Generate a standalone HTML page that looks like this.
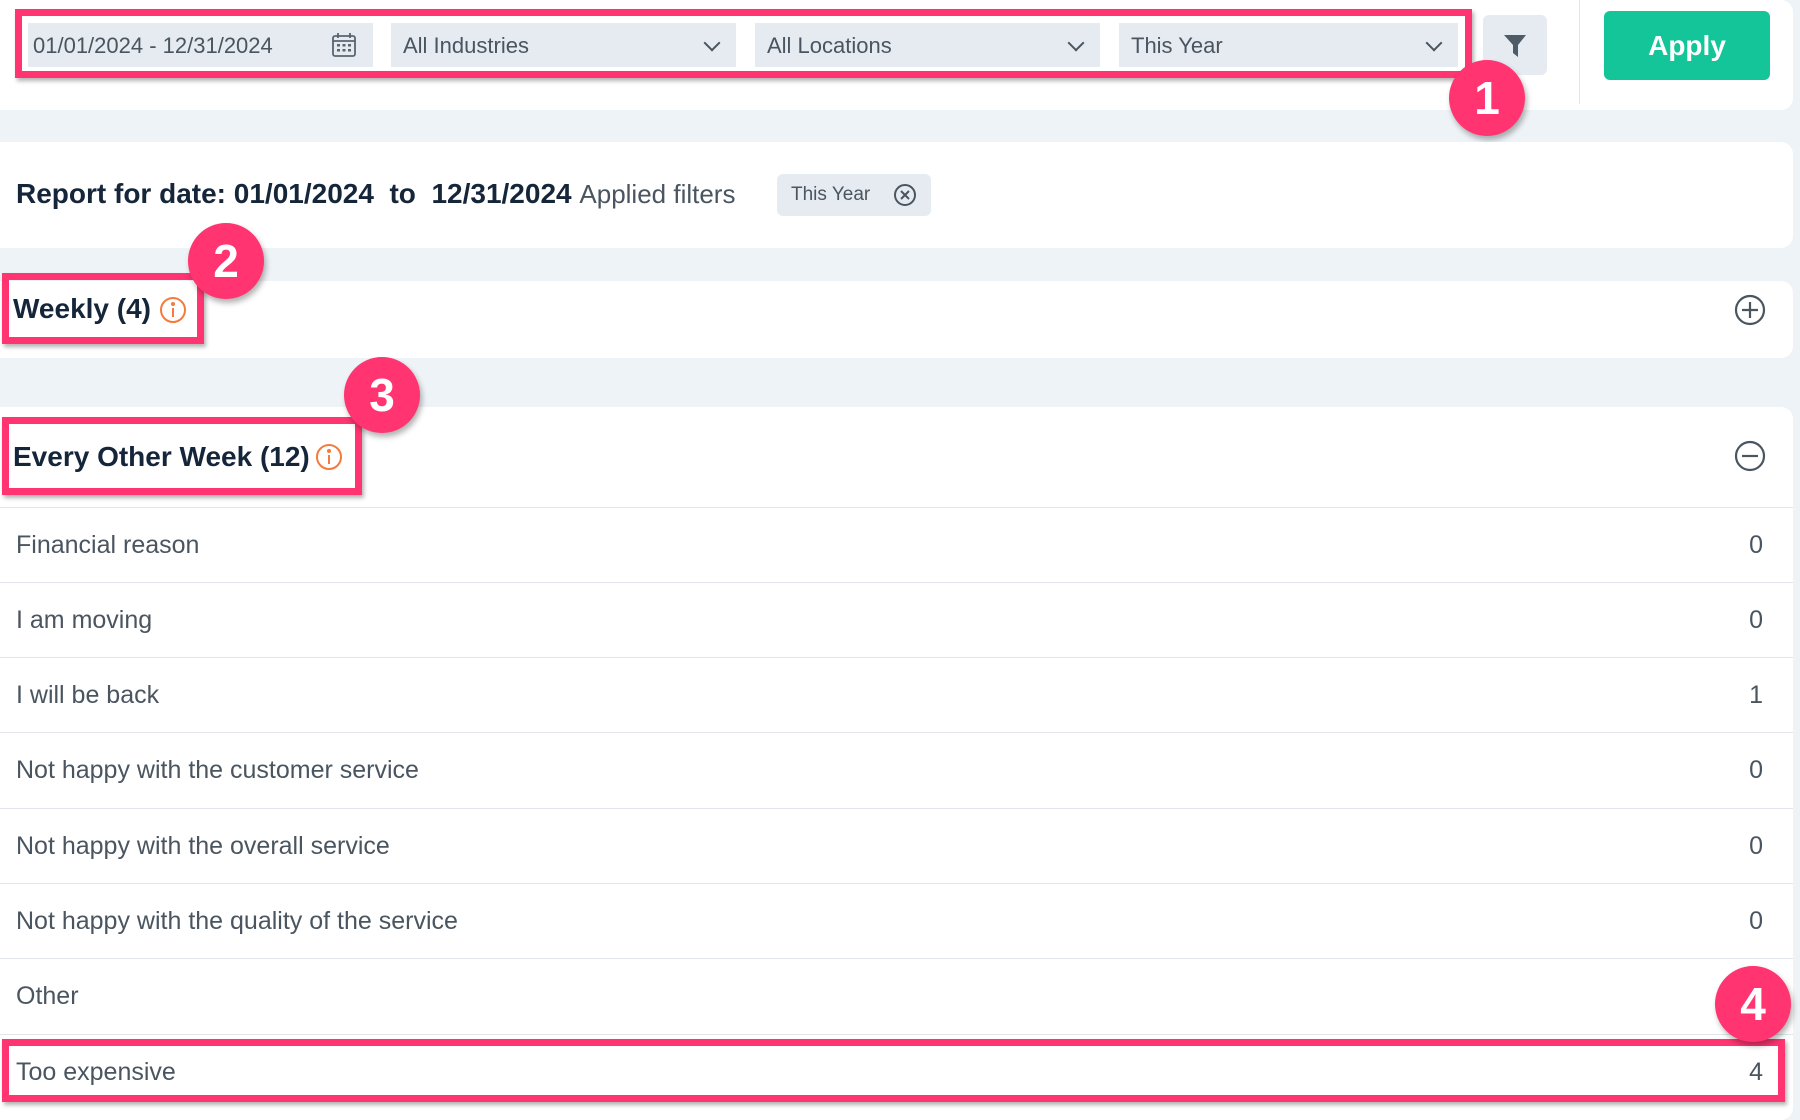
<!DOCTYPE html>
<html><head><meta charset="utf-8"><style>
*{box-sizing:border-box;margin:0;padding:0}
body{width:1800px;height:1120px;background:#eef3f7;font-family:"Liberation Sans",sans-serif;position:relative;overflow:hidden;color:#1b2a3a}
.abs{position:absolute}
.card{position:absolute;left:0;width:1793px;background:#fff;border-radius:0 12px 12px 0}
.inp{position:absolute;top:23px;height:44px;background:#e5ebf1;font-size:22px;color:#4a5560;padding:11px 12px;line-height:24px}
.chev{position:absolute;right:18px;top:14px;width:12px;height:12px;border-right:2px solid #4a5560;border-bottom:2px solid #4a5560;transform:rotate(45deg)}
.pink{position:absolute;border:7px solid #ff3470;box-shadow:2px 3px 4px rgba(0,0,0,.3)}
.badge{position:absolute;width:76px;height:76px;border-radius:50%;background:#ff3470;color:#fff;font-weight:bold;font-size:46px;text-align:center;line-height:76px;box-shadow:2px 4px 6px rgba(0,0,0,.3)}
.row{position:absolute;left:0;width:1793px;height:75px;border-top:1px solid #e2e6ea;font-size:25px;color:#4a5560;padding-left:16px;line-height:75px}
.row span{position:absolute;right:30px}
.h{font-size:28px;font-weight:bold;color:#15263a}
</style></head><body>
<div class="card" style="top:0;height:110px"></div>
<div class="inp" style="left:28px;width:345px;padding-left:5px">01/01/2024 - 12/31/2024
<svg class="abs" style="right:16px;top:9px" width="26" height="26" viewBox="0 0 26 26" fill="none" stroke="#5a6570" stroke-width="1.8"><rect x="2" y="4" width="22" height="20" rx="2"/><line x1="2" y1="9" x2="24" y2="9"/><line x1="7" y1="1" x2="7" y2="6"/><line x1="19" y1="1" x2="19" y2="6"/><g fill="#5a6570" stroke="none"><rect x="6" y="12" width="3" height="2.5"/><rect x="11.5" y="12" width="3" height="2.5"/><rect x="17" y="12" width="3" height="2.5"/><rect x="6" y="17" width="3" height="2.5"/><rect x="11.5" y="17" width="3" height="2.5"/><rect x="17" y="17" width="3" height="2.5"/></g></svg></div>
<div class="inp" style="left:391px;width:345px">All Industries<div class="chev"></div></div>
<div class="inp" style="left:755px;width:345px">All Locations<div class="chev"></div></div>
<div class="inp" style="left:1119px;width:339px">This Year<div class="chev"></div></div>
<div class="pink" style="left:15px;top:9px;width:1457px;height:69px"></div>
<div class="abs" style="left:1483px;top:15px;width:64px;height:60px;background:#e5ebf1;border-radius:6px">
<svg class="abs" style="left:19px;top:18px" width="26" height="26" viewBox="0 0 26 26"><path d="M2 2H24L16 12V24L11 20V12Z" fill="#4f5c68"/></svg></div>
<div class="abs" style="left:1579px;top:0;width:1px;height:104px;background:#e2e6ea"></div>
<div class="abs" style="left:1604px;top:11px;width:166px;height:69px;background:#13c598;border-radius:6px;color:#fff;font-weight:bold;font-size:28px;text-align:center;line-height:69px">Apply</div>
<div class="badge" style="left:1449px;top:60px">1</div>

<div class="card" style="top:142px;height:106px"></div>
<div class="abs" style="left:16px;top:178px;font-size:28px;font-weight:bold;color:#15263a;white-space:nowrap">Report for date: 01/01/2024&nbsp; to &nbsp;12/31/2024 <span style="font-weight:normal;color:#4a5560;font-size:26px">Applied filters</span></div>
<div class="abs" style="left:777px;top:174px;width:154px;height:42px;background:#e5ebf1;border-radius:6px;font-size:19px;color:#4a5560;padding:10px 14px">This Year
<svg class="abs" style="right:14px;top:9px" width="24" height="24" viewBox="0 0 24 24" fill="none" stroke="#4a5560" stroke-width="2"><circle cx="12" cy="12" r="10"/><path d="M8 8L16 16M16 8L8 16"/></svg></div>

<div class="card" style="top:281px;height:77px"></div>
<div class="abs h" style="left:13px;top:293px">Weekly (4)</div>
<svg class="abs" style="left:159px;top:296px" width="28" height="28" viewBox="0 0 28 28" fill="none" stroke="#f47b3c" stroke-width="2"><circle cx="14" cy="14" r="12"/><line x1="14" y1="12" x2="14" y2="21"/><circle cx="14" cy="8" r="1" fill="#f47b3c"/></svg>
<svg class="abs" style="left:1734px;top:294px" width="32" height="32" viewBox="0 0 32 32" fill="none" stroke="#4a5560" stroke-width="2.2"><circle cx="16" cy="16" r="14"/><path d="M16 8V24M8 16H24"/></svg>
<div class="pink" style="left:2px;top:273px;width:202px;height:71px"></div>
<div class="badge" style="left:188px;top:223px">2</div>

<div class="card" style="top:407px;height:713px"></div>
<div class="abs h" style="left:13px;top:441px">Every Other Week (12)</div>
<svg class="abs" style="left:315px;top:443px" width="28" height="28" viewBox="0 0 28 28" fill="none" stroke="#f47b3c" stroke-width="2"><circle cx="14" cy="14" r="12"/><line x1="14" y1="12" x2="14" y2="21"/><circle cx="14" cy="8" r="1" fill="#f47b3c"/></svg>
<svg class="abs" style="left:1734px;top:440px" width="32" height="32" viewBox="0 0 32 32" fill="none" stroke="#4a5560" stroke-width="2.2"><circle cx="16" cy="16" r="14"/><path d="M8 16H24"/></svg>
<div class="pink" style="left:2px;top:417px;width:360px;height:78px"></div>
<div class="badge" style="left:344px;top:357px">3</div>

<div class="row" style="top:507px">Financial reason<span>0</span></div>
<div class="row" style="top:582px">I am moving<span>0</span></div>
<div class="row" style="top:657px">I will be back<span>1</span></div>
<div class="row" style="top:732px">Not happy with the customer service<span>0</span></div>
<div class="row" style="top:808px">Not happy with the overall service<span>0</span></div>
<div class="row" style="top:883px">Not happy with the quality of the service<span>0</span></div>
<div class="row" style="top:958px">Other<span></span></div>
<div class="row" style="top:1034px;height:76px">Too expensive<span>4</span></div>
<div class="pink" style="left:2px;top:1039px;width:1783px;height:63px"></div>
<div class="badge" style="left:1715px;top:966px">4</div>
</body></html>
